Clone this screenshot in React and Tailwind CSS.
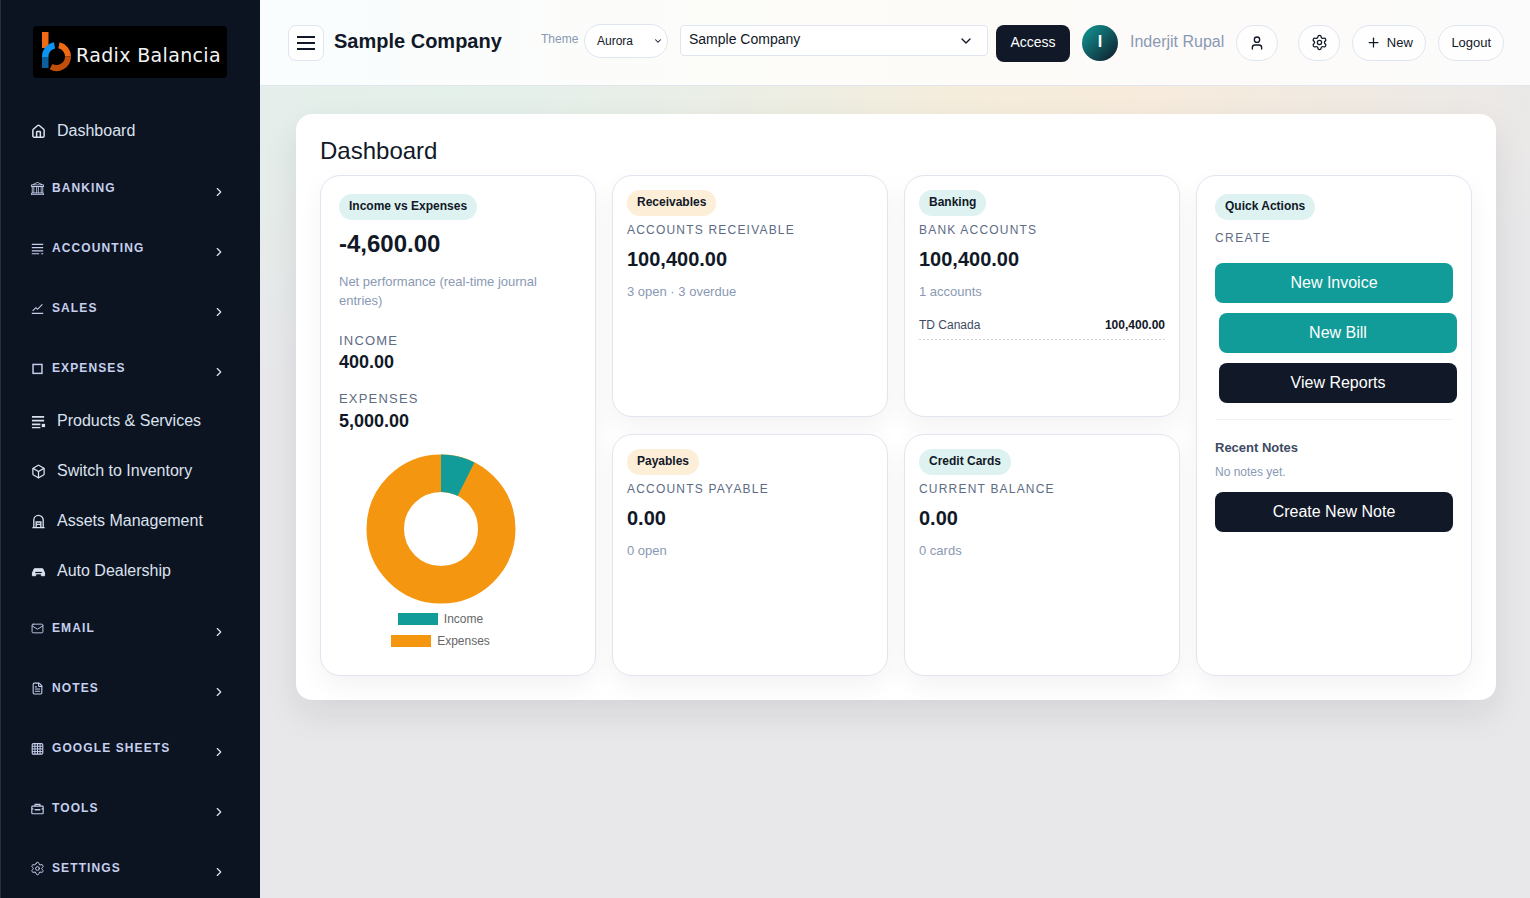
import { ChevronRight, ChevronDown, User, Settings, Plus, House, Box, Mail, FileText } from 'lucide-react'
import { BsBank } from 'react-icons/bs'

const FONT = "font-['Liberation_Sans',Arial,sans-serif]"

// small sidebar drawings that the icon packs don't have in this shape
function Glyph({ size = 14, children, className = '' }) {
  return (
    <svg width={size} height={size} viewBox="0 0 16 16" fill="none" stroke="currentColor" strokeWidth="1.4" className={className}>
      {children}
    </svg>
  )
}

const AccountingIcon = (p) => (
  <Glyph {...p}><path d="M1 3h14M1 7h14M1 11h14M1 14.5h9M12.5 14.5H15" /></Glyph>
)
const SalesIcon = (p) => (
  <Glyph {...p}><path d="M1 14h14M2 11l4-4 2 2 6-6" /></Glyph>
)
const ExpensesIcon = (p) => (
  <Glyph {...p}><rect x="2.5" y="3" width="11" height="11" strokeWidth="1.8" /></Glyph>
)
const ProductsIcon = (p) => (
  <Glyph {...p}>
    <path d="M1 3h13M1 7h13M1 11h9" strokeWidth="1.8" />
    <path d="M1 14.5h9" strokeWidth="1.4" />
    <rect x="11.5" y="10.5" width="3.5" height="3.5" fill="currentColor" stroke="none" />
  </Glyph>
)
const AssetsIcon = (p) => (
  <Glyph {...p}>
    <path d="M3 14.5V6.5a5 5 0 0 1 10 0v8M1.5 14.5h13" />
    <path d="M5.5 14.5v-6h5v6M5.5 11h5" />
  </Glyph>
)
const CarIcon = (p) => (
  <Glyph {...p}>
    <path d="M1.5 9.5 3.5 5h9l2 4.5v3h-3.5v-2H5v2H1.5z" fill="currentColor" strokeWidth="1" />
    <path d="M4.5 9h7" stroke="#0d1421" strokeWidth="1.2" />
  </Glyph>
)
const SheetsIcon = (p) => (
  <Glyph {...p}>
    <rect x="1.5" y="2" width="13" height="13" rx="1.5" />
    <path d="M1.5 5.3h13M1.5 8.5h13M1.5 11.8h13M4.8 2v13M8 2v13M11.2 2v13" strokeWidth="1.2" />
  </Glyph>
)
const ToolsIcon = (p) => (
  <Glyph {...p}>
    <rect x="1" y="5" width="14" height="9.5" rx="1" />
    <path d="M5 5V3h6v2M1 8.5h2M13 8.5h2" />
    <path d="M4.5 9.5h7" strokeWidth="1.8" />
  </Glyph>
)

function NavLink({ icon: Icon, label }) {
  return (
    <div className="flex h-[50px] items-center pl-[30px]">
      <span className="flex w-[15px] shrink-0 justify-center text-[#dbe2ef]">
        <Icon size={15} />
      </span>
      <span className="ml-[11px] text-base text-[#dbe2ef]">{label}</span>
    </div>
  )
}

function NavGroup({ icon: Icon, label }) {
  return (
    <div className="mt-1 flex h-14 items-center pl-[30px] pr-[34px]">
      <span className="flex w-[13px] shrink-0 justify-center text-[#c5d0ee]">
        <Icon size={13} />
      </span>
      <span className="ml-2 text-xs font-bold tracking-[1.1px] text-[#c5d0ee]">{label}</span>
      <ChevronRight size={14} strokeWidth={2} className="ml-auto mt-[7px] text-[#dbe2ef]" />
    </div>
  )
}

function Logo() {
  return (
    <div className="ml-[32px] flex h-[52px] w-[194px] items-center rounded bg-black pl-[9px]">
      <svg width="30" height="40" viewBox="0 0 30 40" fill="none" className="shrink-0">
        <rect x="0" y="0" width="6.5" height="16" fill="#f26a13" />
        <path d="M3.25 25V24.5A11.25 11.25 0 0 1 12.5 13.4" stroke="#0f94f0" strokeWidth="6.5" />
        <rect x="0" y="25" width="6.5" height="11" fill="#0a5f9e" />
        <path d="M17 13.3A11.5 11.5 0 0 1 26 24.5" stroke="#f06a12" strokeWidth="6" />
        <path d="M26 24.5A11.5 11.5 0 0 1 9 34.6" stroke="#c24e0b" strokeWidth="6" />
      </svg>
      <span className="ml-[4px] mt-[6px] font-['DejaVu_Sans',sans-serif] text-[19px] leading-none tracking-[0.35px] text-[#f2f2f2]">Radix Balancia</span>
    </div>
  )
}

function Sidebar() {
  return (
    <aside className="w-[260px] shrink-0 border-l border-[#2a303b] bg-[#0d1421] pt-[26px]">
      <Logo />
      <nav className="mt-[28px]">
        <NavLink icon={(p) => <House {...p} strokeWidth={2.4} />} label="Dashboard" />
        <NavGroup icon={BsBank} label="BANKING" />
        <NavGroup icon={AccountingIcon} label="ACCOUNTING" />
        <NavGroup icon={SalesIcon} label="SALES" />
        <NavGroup icon={ExpensesIcon} label="EXPENSES" />
        <NavLink icon={ProductsIcon} label="Products & Services" />
        <NavLink icon={(p) => <Box {...p} strokeWidth={2} />} label="Switch to Inventory" />
        <NavLink icon={AssetsIcon} label="Assets Management" />
        <NavLink icon={CarIcon} label="Auto Dealership" />
        <NavGroup icon={(p) => <Mail {...p} strokeWidth={1.7} />} label="EMAIL" />
        <NavGroup icon={(p) => <FileText {...p} strokeWidth={2} />} label="NOTES" />
        <NavGroup icon={SheetsIcon} label="GOOGLE SHEETS" />
        <NavGroup icon={ToolsIcon} label="TOOLS" />
        <NavGroup icon={(p) => <Settings {...p} size={15} strokeWidth={1.6} className="shrink-0" />} label="SETTINGS" />
      </nav>
    </aside>
  )
}

function RoundBtn({ children, className = '' }) {
  return (
    <button className={`flex h-9 items-center justify-center rounded-full border border-[#dfe5f1] bg-white/70 text-[13px] text-[#111827] ${className}`}>
      {children}
    </button>
  )
}

function Topbar() {
  return (
    <header className="flex h-[86px] items-center border-b border-[#e2e6ee] bg-[linear-gradient(90deg,#f9fdfe_0%,#fdfcf8_45%,#fdfbf9_70%,#fbfbfb_100%)] pl-[28px]">
      <button className="flex h-9 w-9 items-center justify-center rounded-lg border border-[#dfe5f1] bg-white">
        <span className="flex w-[18px] flex-col gap-[4px]">
          <span className="h-[2px] bg-[#111827]" />
          <span className="h-[2px] bg-[#111827]" />
          <span className="h-[2px] bg-[#111827]" />
        </span>
      </button>
      <div className="mb-[4px] ml-[10px] w-[207px] text-xl font-bold text-[#111827]">Sample Company</div>
      <span className="mb-[8px] w-[43px] text-xs text-[#8a99b3]">Theme</span>
      <button className="mb-[4px] flex h-[34px] w-[84px] items-center rounded-full border border-[#dfe5f1] bg-white pl-[12px] pr-[4px] text-xs text-[#111827]">
        Aurora
        <ChevronDown size={10} strokeWidth={2.5} className="ml-auto" />
      </button>
      <div className="mb-[4px] ml-[12px] flex h-[31px] w-[308px] items-center rounded border border-[#dfe5f1] bg-white pl-2 pr-[13px] text-sm text-[#111827]">
        <span className="mb-[4px]">Sample Company</span>
        <ChevronDown size={16} strokeWidth={2} className="ml-auto" />
      </div>
      <button className="ml-[8px] mt-[1px] h-[37px] w-[74px] rounded-lg bg-[#111827] pb-[2px] text-sm text-white">Access</button>
      <div className="ml-[12px] flex h-9 w-9 items-center justify-center rounded-full bg-[linear-gradient(135deg,#119c99,#111827)] pb-[2px] text-base font-bold text-white">I</div>
      <span className="mb-[2px] ml-[12px] text-base text-[#8a99b3]">Inderjit Rupal</span>
      <RoundBtn className="ml-[12px] w-[42px]"><User size={16} strokeWidth={2} /></RoundBtn>
      <RoundBtn className="ml-[20px] w-[42px]"><Settings size={17} strokeWidth={1.8} /></RoundBtn>
      <RoundBtn className="ml-[12px] w-[74px] gap-[6px]"><Plus size={15} strokeWidth={2} />New</RoundBtn>
      <RoundBtn className="ml-[12px] w-[66px]">Logout</RoundBtn>
    </header>
  )
}

function Card({ className = '', children }) {
  return (
    <div className={`rounded-[20px] border border-[#e0e5f0] bg-white shadow-[0_10px_26px_rgba(17,24,39,0.05)] ${className}`}>
      {children}
    </div>
  )
}

function Pill({ tone = 'teal', children }) {
  const cls = tone === 'teal' ? 'bg-[#def2f1]' : 'bg-[#fdeed8]'
  return (
    <span className={`inline-flex h-[26px] items-center rounded-full px-[10px] pb-[1px] text-xs font-bold text-[#111827] ${cls}`}>
      {children}
    </span>
  )
}

function Eyebrow({ children }) {
  return <div className="text-xs tracking-[1.2px] text-[#5d6b84]">{children}</div>
}

function StatCard({ pill, tone, label, value, sub, children }) {
  return (
    <Card className="px-[14px] pt-[13px]">
      <Pill tone={tone}>{pill}</Pill>
      <div className="mt-[6px]"><Eyebrow>{label}</Eyebrow></div>
      <div className="mt-[7px] text-xl font-bold leading-[28px] text-[#111827]">{value}</div>
      <div className="mt-[10px] text-[13px] leading-[18px] text-[#8a99b3]">{sub}</div>
      {children}
    </Card>
  )
}

function Donut() {
  const cx = 75
  const r = 55.75
  const angle = (400 / 5400) * 2 * Math.PI
  const x = cx + r * Math.sin(angle)
  const y = cx - r * Math.cos(angle)
  return (
    <svg width="150" height="150" viewBox="0 0 150 150" className="mx-auto">
      <circle cx={cx} cy={cx} r={r} fill="none" stroke="#f59610" strokeWidth="37.5" />
      <path d={`M${cx} ${cx - r}A${r} ${r} 0 0 1 ${x} ${y}`} fill="none" stroke="#119c99" strokeWidth="37.5" />
    </svg>
  )
}

function LegendRow({ color, label }) {
  return (
    <div className="flex h-[22px] items-center justify-center gap-[6px] text-xs text-[#666]">
      <span className={`h-3 w-10 ${color}`} />
      {label}
    </div>
  )
}

function IncomeCard() {
  return (
    <Card className="row-span-2 px-[18px] pt-[17px]">
      <Pill>Income vs Expenses</Pill>
      <div className="mt-[8px] text-2xl font-bold leading-[32px] text-[#111827]">-4,600.00</div>
      <p className="mt-[12px] text-[13px] leading-[19px] text-[#8a99b3]">Net performance (real-time journal entries)</p>
      <div className="mt-[21px] text-[13px] leading-[20px] tracking-[1.2px] text-[#5d6b84]">INCOME</div>
      <div className="text-lg font-bold leading-[22px] text-[#111827]">400.00</div>
      <div className="mt-[16px] text-[13px] leading-[20px] tracking-[1.2px] text-[#5d6b84]">EXPENSES</div>
      <div className="text-lg font-bold leading-[24px] text-[#111827]">5,000.00</div>
      <div className="mt-[21px] w-[203px]">
        <Donut />
        <div className="mt-[4px]">
          <LegendRow color="bg-[#119c99]" label="Income" />
          <LegendRow color="bg-[#f59610]" label="Expenses" />
        </div>
      </div>
    </Card>
  )
}

function ActionBtn({ dark, className = '', children }) {
  return (
    <button className={`block h-10 w-[238px] rounded-lg text-base text-white ${dark ? 'bg-[#111827]' : 'bg-[#119c99]'} ${className}`}>
      {children}
    </button>
  )
}

function QuickActions() {
  return (
    <Card className="row-span-2 px-[18px] pt-[17px]">
      <Pill>Quick Actions</Pill>
      <div className="mt-[11px] text-xs leading-[14px] tracking-[1.4px] text-[#5d6b84]">CREATE</div>
      <ActionBtn className="mt-[18px]">New Invoice</ActionBtn>
      <ActionBtn className="ml-1 mt-[10px]">New Bill</ActionBtn>
      <ActionBtn dark className="ml-1 mt-[10px]">View Reports</ActionBtn>
      <div className="mt-4 w-[238px] border-t border-[#f1f3f7]" />
      <div className="mt-[20px] text-[13px] font-bold leading-[15px] text-[#3d4a63]">Recent Notes</div>
      <div className="mt-[10px] text-xs leading-[14px] text-[#8a99b3]">No notes yet.</div>
      <ActionBtn dark className="mt-[13px]">Create New Note</ActionBtn>
    </Card>
  )
}

export default function App() {
  return (
    <div className={`flex h-[898px] w-[1530px] overflow-hidden ${FONT}`}>
      <Sidebar />
      <div className="flex min-w-0 flex-1 flex-col bg-[#e8e8ea]">
        <Topbar />
        <main className="flex-1 bg-[radial-gradient(ellipse_700px_300px_at_15%_0%,#e4f0ea_0%,transparent_100%),radial-gradient(ellipse_650px_280px_at_55%_0%,#fcecd6_0%,transparent_100%)] px-9 pt-7">
          <section className="h-[586px] w-[1200px] rounded-2xl bg-white px-6 pt-[21px] shadow-[0_14px_34px_rgba(17,24,39,0.09)]">
            <h1 className="text-2xl leading-[32px] text-[#111827]">Dashboard</h1>
            <div className="mt-[8px] grid h-[501px] grid-cols-[repeat(4,276px)] grid-rows-[242px_242px] gap-x-4 gap-y-[17px]">
              <IncomeCard />
              <StatCard pill="Receivables" tone="amber" label="ACCOUNTS RECEIVABLE" value="100,400.00" sub="3 open · 3 overdue" />
              <StatCard pill="Banking" label="BANK ACCOUNTS" value="100,400.00" sub="1 accounts">
                <div className="mt-[10px] flex h-[28px] items-center justify-between text-xs text-[#3d4a63]">
                  <span>TD Canada</span>
                  <span className="font-bold text-[#111827]">100,400.00</span>
                </div>
                <div className="h-px bg-[repeating-linear-gradient(90deg,#cfd5df_0_2px,transparent_2px_4px)]" />
              </StatCard>
              <QuickActions />
              <StatCard pill="Payables" tone="amber" label="ACCOUNTS PAYABLE" value="0.00" sub="0 open" />
              <StatCard pill="Credit Cards" label="CURRENT BALANCE" value="0.00" sub="0 cards" />
            </div>
          </section>
        </main>
      </div>
    </div>
  )
}
